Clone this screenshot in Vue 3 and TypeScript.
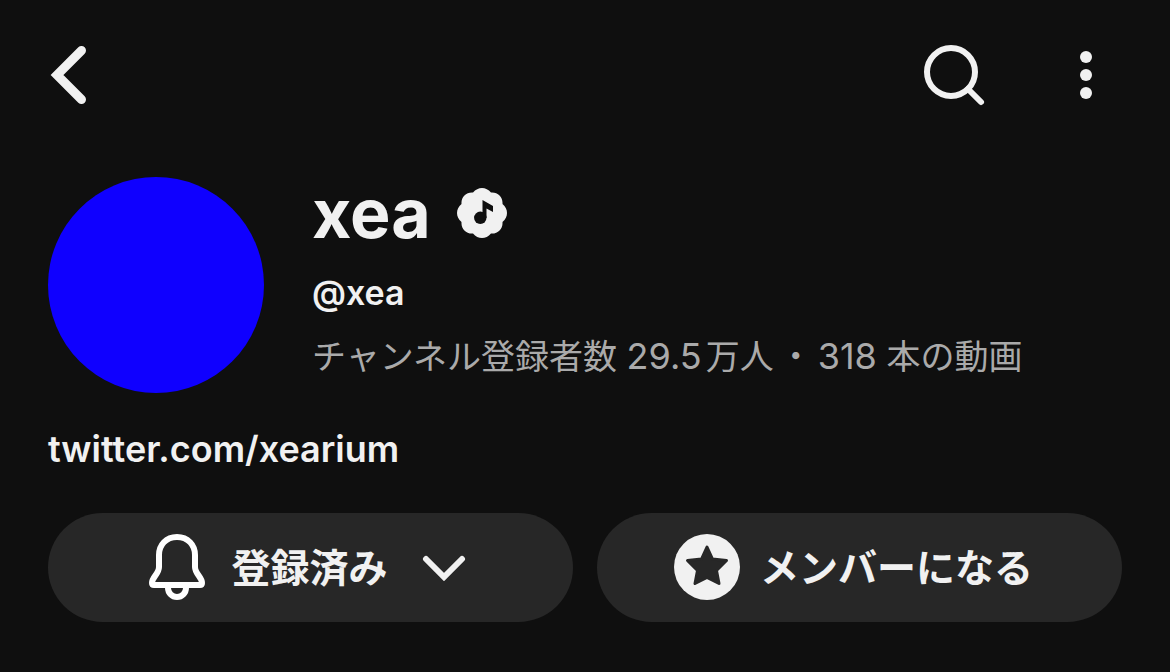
<script setup lang="ts">
const channel = {
  name: 'xea',
  handle: '@xea',
  subscribers: '29.5',
  videos: '318',
  site: 'twitter.com/xearium',
}
</script>

<template>
  <main class="channel">
    <header class="bar">
      <button class="icon-button" type="button" aria-label="戻る">
        <svg width="40" height="60" viewBox="0 0 40 60" fill="none" stroke="#f1f1f1" stroke-width="9">
          <path d="M33.500 5.500 L9 30 L33.500 54.500" stroke-linecap="round" />
        </svg>
      </button>
      <div class="actions">
        <button class="icon-button" type="button" aria-label="検索">
          <svg width="64" height="64" viewBox="0 0 64 64" fill="none" stroke="#f1f1f1" stroke-width="6">
            <circle cx="29" cy="29" r="24" />
            <path d="M46 46 L59 59" stroke-linecap="round" />
          </svg>
        </button>
        <button class="icon-button" type="button" aria-label="その他">
          <svg width="14" height="50" viewBox="0 0 14 50" fill="#f1f1f1">
            <circle cx="7" cy="7" r="6" /><circle cx="7" cy="25" r="6" /><circle cx="7" cy="43" r="6" />
          </svg>
        </button>
      </div>
    </header>

    <section class="profile">
      <div class="avatar"></div>
      <div class="info">
        <h1 class="name">
          {{ channel.name }}
          <svg width="50" height="50" viewBox="0 0 50 50" role="img" aria-label="公式アーティスト">
            <path fill="#f1f1f1" d="M16 4.500 C21 -1.500 29 -1.500 34 4.500 C41 4 46 9 45.500 16 C51.500 21 51.500 29 45.500 34 C46 41 41 46 34 45.500 C29 51.500 21 51.500 16 45.500 C9 46 4 41 4.500 34 C-1.500 29 -1.500 21 4.500 16 C4 9 9 4 16 4.500Z" />
            <path fill="#0f0f0f" d="M25.500 12 L36 18 V24 L29.500 20.500 V30 H25.500Z" />
            <circle cx="23.300" cy="29.800" r="6.200" fill="#0f0f0f" />
          </svg>
        </h1>
        <p class="handle">{{ channel.handle }}</p>
        <p class="stats">
          チャンネル登録者数 <span class="figure subscribers">{{ channel.subscribers }}</span>万人<span class="dot">・</span><span class="figure">{{ channel.videos }}</span> 本の動画
        </p>
      </div>
    </section>

    <a class="site" href="https://twitter.com/xearium">{{ channel.site }}</a>

    <div class="buttons">
      <button class="pill" type="button">
        <svg width="56" height="66" viewBox="0 0 56 66" fill="none" stroke="#ffffff" stroke-width="6" stroke-linejoin="round">
          <path d="M28 3 C17 3 10 11 10 21 V33 C10 40 3 43 3 49 Q3 51 5 51 H51 Q53 51 53 49 C53 43 46 40 46 33 V21 C46 11 39 3 28 3Z" />
          <path d="M19 52 V54 A9 9 0 0 0 37 54 V52" />
        </svg>
        <span class="label subscribed">登録済み</span>
        <svg class="chevron" width="44" height="28" viewBox="0 0 44 28" fill="none" stroke="#f1f1f1" stroke-width="6">
          <path d="M4 6 L22 24 L40 6" stroke-linecap="round" />
        </svg>
      </button>
      <button class="pill" type="button">
        <svg width="66" height="66" viewBox="0 0 66 66">
          <circle cx="33" cy="33" r="33" fill="#f1f1f1" />
          <path fill="#272727" stroke="#272727" stroke-width="3" stroke-linejoin="round" d="M33 13 L38.500 25 L52.500 26.500 L42.500 36.500 L45 49.500 L33 43.500 L21 49.500 L23.500 36.500 L13.500 26.500 L27.500 25Z" />
        </svg>
        <span class="label member">メンバーになる</span>
      </button>
    </div>
  </main>
</template>

<style>
body { background: #0f0f0f; }
</style>

<style scoped>
.channel {
  box-sizing: border-box;
  padding: 42px 48px 50px;
  color: #f1f1f1;
  background: #0f0f0f;
  font-family: Inter, "Noto Sans CJK JP", sans-serif;
}
button { border: 0; padding: 0; color: inherit; font: inherit; cursor: pointer; }
svg { display: block; flex: none; }
.bar, .actions { display: flex; align-items: center; }
.bar { justify-content: space-between; height: 66px; }
.actions { gap: 93px; padding-right: 29px; }
.icon-button { background: none; }
.profile { display: flex; gap: 48px; margin-top: 69px; }
.avatar { flex: none; width: 216px; height: 216px; border-radius: 50%; background: #0f00ff; }
.info { white-space: nowrap; }
.name { display: flex; align-items: center; gap: 26px; margin: 0; font-size: 68px; line-height: 72px; font-weight: 700; }
.handle { margin: 20px 0 0; font-size: 34px; line-height: 48px; font-weight: 600; }
.stats { margin: 16px 0 0; font-size: 34px; line-height: 48px; color: #aaa; }
.figure { font-size: 36px; line-height: 1; }
.subscribers { margin-right: 4px; }
.dot { margin: 0 5px; }
.site { display: block; width: fit-content; margin-top: 32px; color: inherit; font-size: 36px; line-height: 48px; font-weight: 600; font-variant-ligatures: none; text-decoration: none; }
.buttons { display: grid; grid-template-columns: 1fr 1fr; gap: 24px; margin-top: 40px; }
.pill { display: flex; align-items: center; justify-content: center; height: 109px; padding-bottom: 2px; border-radius: 55px; background: #272727; font-size: 39px; font-weight: 700; white-space: nowrap; }
.label { padding-bottom: 4px; }
.subscribed { margin: 0 34px 0 26px; }
.chevron { margin-right: 6px; }
.member { margin: 0 12px 0 20px; }
</style>
